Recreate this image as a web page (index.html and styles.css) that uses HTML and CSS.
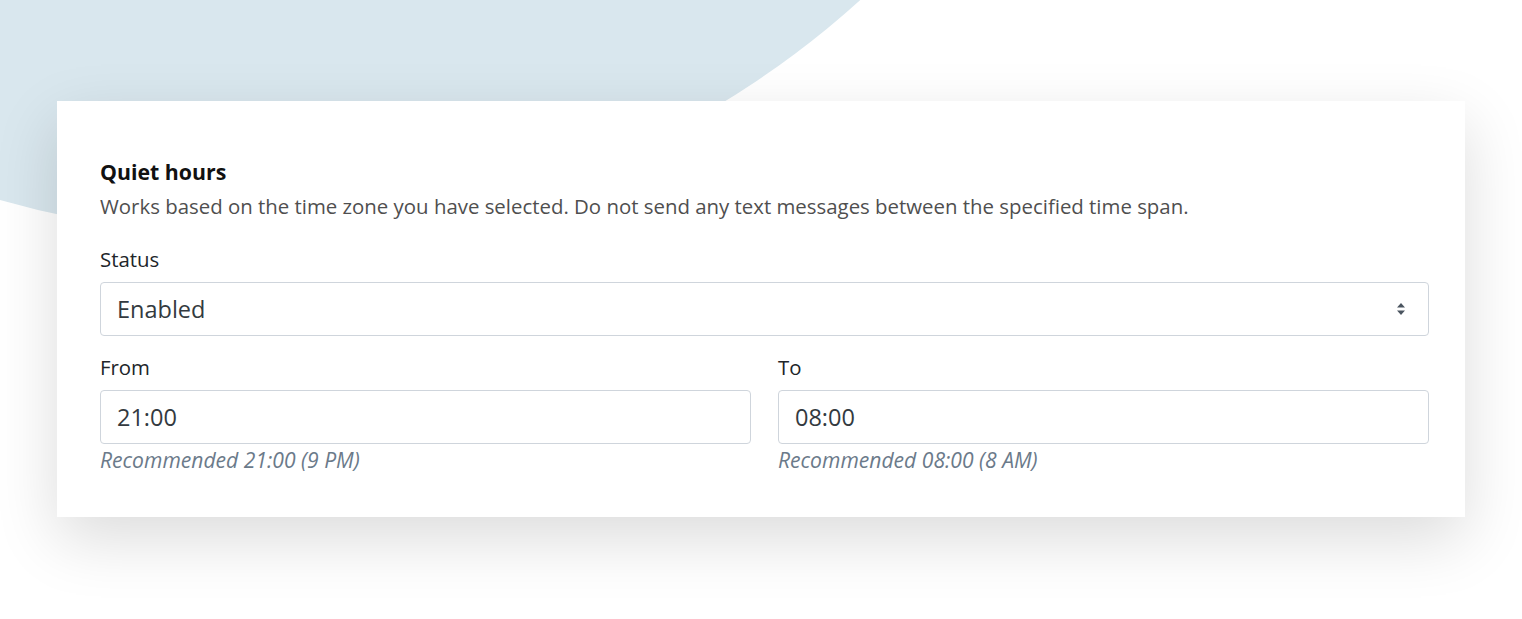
FILE: index.html
```html
<!DOCTYPE html>
<html lang="en">
<head>
<meta charset="utf-8">
<title>Quiet hours</title>
<link rel="stylesheet" href="styles.css">
</head>
<body>
<div class="blob"></div>
<main class="page">
  <section class="card">
    <h2 class="title">Quiet hours</h2>
    <p class="desc">Works based on the time zone you have selected. Do not send any text messages between the specified time span.</p>
    <div class="field status">
      <label class="label">Status</label>
      <div class="control select">
        <span>Enabled</span>
        <svg class="caret" width="10" height="16" viewBox="0 0 10 16"><path d="M5 2 L9 6.5 H1 Z M1 9.5 H9 L5 14 Z" fill="#4b5560"/></svg>
      </div>
    </div>
    <div class="row">
      <div class="field">
        <label class="label">From</label>
        <div class="control">21:00</div>
        <div class="help">Recommended 21:00 (9 PM)</div>
      </div>
      <div class="field">
        <label class="label">To</label>
        <div class="control">08:00</div>
        <div class="help">Recommended 08:00 (8 AM)</div>
      </div>
    </div>
  </section>
</main>
</body>
</html>
```
FILE: styles.css
```css
html, body {
  margin: 0;
  padding: 0;
  background: #ffffff;
  height: 619px;
  overflow: hidden;
}
body {
  position: relative;
  font-family: "Open Sans", "Noto Sans", sans-serif;
  color: #212529;
}
.blob {
  position: absolute;
  left: -660px;
  top: -1585px;
  width: 1820px;
  height: 1820px;
  border-radius: 50%;
  background: #d9e7ee;
}
.page {
  position: relative;
  padding: 101px 0 0 57px;
}
.card {
  box-sizing: border-box;
  width: 1408px;
  height: 416px;
  background: #fff;
  padding: 56px 36px 0 43px;
  box-shadow: 0 22px 60px rgba(0, 0, 0, 0.14);
}
.title {
  margin: 0;
  font-size: 21.3px;
  font-weight: 700;
  line-height: 30px;
  color: #111;
}
.desc {
  margin: 4px 0 0;
  font-size: 20.4px;
  line-height: 30px;
  color: #4f4f4f;
}
.field {
  display: flex;
  flex-direction: column;
}
.status {
  margin-top: 23px;
}
.label {
  font-size: 20.4px;
  line-height: 30px;
  color: #212529;
  margin-bottom: 8px;
}
.control {
  box-sizing: border-box;
  height: 54px;
  border: 1.5px solid #cfd5dc;
  border-radius: 4px;
  padding: 0 16px;
  display: flex;
  align-items: center;
  font-size: 23.5px;
  color: #333a40;
}
.select {
  justify-content: space-between;
  padding-right: 22px;
}
.caret {
  display: block;
}
.row {
  display: grid;
  grid-template-columns: 1fr 1fr;
  column-gap: 27px;
  margin-top: 16px;
}
.help {
  margin-top: 1px;
  font-size: 21.1px;
  line-height: 30px;
  font-style: italic;
  color: #6b7a8a;
}
```
